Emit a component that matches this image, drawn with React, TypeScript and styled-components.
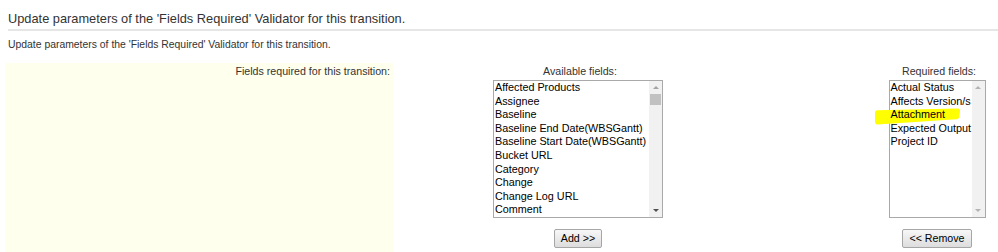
import React from 'react';
import styled, { createGlobalStyle } from 'styled-components';

const GlobalStyle = createGlobalStyle`
  html, body {
    margin: 0;
    padding: 0;
    background: #ffffff;
  }
  body {
    font-family: 'Liberation Sans', Arial, Helvetica, sans-serif;
    color: #333333;
  }
`;

const available = [
  'Affected Products',
  'Assignee',
  'Baseline',
  'Baseline End Date(WBSGantt)',
  'Baseline Start Date(WBSGantt)',
  'Bucket URL',
  'Category',
  'Change',
  'Change Log URL',
  'Comment'
];

const required = ['Actual Status', 'Affects Version/s', 'Attachment', 'Expected Output', 'Project ID'];

const App = () => {
  return (
    <Page>
      <GlobalStyle />
      <Heading>Update parameters of the 'Fields Required' Validator for this transition.</Heading>
      <Description>Update parameters of the 'Fields Required' Validator for this transition.</Description>
      <Form>
        <LabelCell>Fields required for this transition:</LabelCell>
        <Column>
          <ColumnLabel>Available fields:</ColumnLabel>
          <ListBox $width={170}>
            <Options>
              {available.map((f) => (
                <Option key={f}>{f}</Option>
              ))}
            </Options>
            <ScrollTrack>
              <Arrow>
                <Triangle $up $color="#a3a3a3" />
              </Arrow>
              <Thumb />
              <Fill />
              <Arrow>
                <Triangle $color="#505050" />
              </Arrow>
            </ScrollTrack>
          </ListBox>
          <Button>Add &gt;&gt;</Button>
        </Column>
        <div />
        <Column>
          <ColumnLabel>Required fields:</ColumnLabel>
          <ListBox $width={97}>
            {/* marker stroke drawn over the screenshot */}
            <Highlight viewBox="0 0 86 17" width={86} height={17}>
              <path d="M2 2.2 L82.5 0.4 Q85.6 0.6 85 4 L83.8 10 Q83.2 11.2 81.4 11.3 L2.4 16.4 Q0 16.4 0 13.8 L0 4.6 Q0 2.3 2 2.2 Z" fill="#ffff00" />
            </Highlight>
            <Options>
              {required.map((f) => (
                <Option key={f}>{f}</Option>
              ))}
            </Options>
            <ScrollTrack>
              <Arrow>
                <Triangle $up $color="#b4b4b4" />
              </Arrow>
              <Fill />
              <Arrow>
                <Triangle $color="#b4b4b4" />
              </Arrow>
            </ScrollTrack>
          </ListBox>
          <Button>&lt;&lt; Remove</Button>
        </Column>
      </Form>
    </Page>
  );
};

const Page = styled.div`
  width: 998px;
  height: 252px;
  overflow: hidden;
`;

const Heading = styled.h2`
  margin: 0 0 0 8px;
  padding: 11px 0 2px;
  font-size: 12.8px;
  line-height: 16px;
  font-weight: normal;
  color: #333333;
  border-bottom: 2px solid #e6e6e6;
`;

const Description = styled.p`
  margin: 7px 0 0 8px;
  font-size: 10.4px;
  line-height: 13px;
  color: #333333;
`;

const Form = styled.div`
  display: grid;
  grid-template-columns: 389px 368px 114px 122px;
  margin: 12px 0 0 5px;
`;

const LabelCell = styled.div`
  background: #ffffee;
  text-align: right;
  padding: 1.5px 4px 0 0;
  min-height: 200px;
  font-size: 10.67px;
  line-height: 13px;
  color: #333333;
`;

const Column = styled.div`
  display: flex;
  flex-direction: column;
  align-items: center;
`;

const ColumnLabel = styled.div`
  padding: 1.5px 0 2.5px 4px;
  font-size: 10.67px;
  line-height: 13px;
  color: #333333;
`;

const ListBox = styled.div<{ $width: number }>`
  position: relative;
  display: flex;
  box-sizing: border-box;
  width: ${(p) => p.$width}px;
  height: 138px;
  border: 1px solid #a9a9a9;
  background: #ffffff;
`;

const Options = styled.div`
  position: relative;
  z-index: 2;
  flex: 1;
  overflow: hidden;
  padding-left: 1px;
  font-size: 10.8px;
  line-height: 13.6px;
  color: #000000;
  white-space: nowrap;
`;

const Option = styled.div`
  height: 13.6px;
`;

const ScrollTrack = styled.div`
  display: flex;
  flex-direction: column;
  width: 13px;
  flex: none;
  background: #f1f1f1;
`;

const Arrow = styled.div`
  height: 13px;
  display: flex;
  align-items: center;
  justify-content: center;
`;

const Triangle = styled.div<{ $up?: boolean; $color: string }>`
  width: 0;
  height: 0;
  border-left: 3.5px solid transparent;
  border-right: 3.5px solid transparent;
  ${(p) =>
    p.$up ? `border-bottom: 3.5px solid ${p.$color};` : `border-top: 3.5px solid ${p.$color};`}
`;

const Thumb = styled.div`
  height: 11px;
  margin: 0 1px;
  background: #c1c1c1;
`;

const Fill = styled.div`
  flex: 1;
`;

const Highlight = styled.svg`
  position: absolute;
  left: -15px;
  top: 27px;
  z-index: 1;
  pointer-events: none;
`;

const Button = styled.button`
  margin-top: 11px;
  height: 19px;
  padding: 0 6px;
  box-sizing: border-box;
  font-family: inherit;
  font-size: 10.67px;
  line-height: 17px;
  color: #000000;
  border: 1px solid #a6a6a6;
  border-radius: 2px;
  background: linear-gradient(#f7f7f7, #dddddd);
`;

export default App;
